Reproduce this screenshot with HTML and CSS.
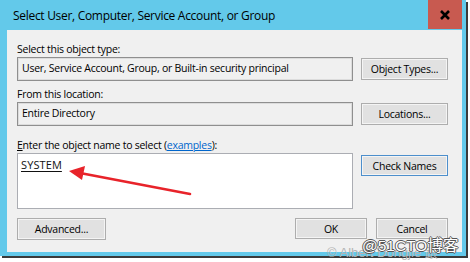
FILE: index.html
```html
<!DOCTYPE html>
<html>
<head>
<meta charset="utf-8">
<link rel="stylesheet" href="styles.css">
</head>
<body>
<div class="window">
  <div class="titlebar">
    <span class="title">Select User, Computer, Service Account, or Group</span>
    <div class="close">
      <svg width="12" height="10" viewBox="0 0 12 10"><path d="M2 1 L10 9 M10 1 L2 9" stroke="#000" stroke-width="2.6" fill="none"/></svg>
    </div>
  </div>
  <div class="content">
    <div class="label">Select this object type:</div>
    <div class="row">
      <div class="field">User, Service Account, Group, or Built-in security principal</div>
      <div class="btn btn-side">Object Types...</div>
    </div>
    <div class="label label-gap">From this location:</div>
    <div class="row">
      <div class="field">Entire Directory</div>
      <div class="btn btn-side">Locations...</div>
    </div>
    <div class="label label-gap2"><u>E</u>nter the object name to select (<a class="link">examples</a>):</div>
    <div class="row">
      <div class="textarea"><span class="system">SYSTEM</span></div>
      <div class="btn btn-side btn-default">Check Names</div>
    </div>
    <div class="bottom">
      <div class="btn btn-adv">Advanced...</div>
      <div class="actions">
        <div class="btn btn-ok">OK</div>
        <div class="btn btn-ok">Cancel</div>
      </div>
    </div>
    <svg class="arrow" width="140" height="40" viewBox="0 0 140 40">
      <path d="M122 33 L12 12" stroke="#E8232A" stroke-width="2.6" fill="none" stroke-linecap="round"/>
      <path d="M1 10 L17 5 L14 19 Z" fill="#E8232A"/>
    </svg>
  </div>
  <div class="watermark">
    <span class="wm-back">© Albert Dongjie 跟</span>
    <span class="wm-front">@51CTO博客</span>
  </div>
</div>
</body>
</html>
```
FILE: styles.css
```css
* { box-sizing: border-box; }
html, body { margin: 0; padding: 0; background: #ffffff; }
body {
  font-family: "Open Sans", "Noto Sans CJK SC", sans-serif;
  font-size: 10.5px;
  letter-spacing: -0.25px;
  color: #000;
  width: 470px;
  height: 262px;
  overflow: hidden;
}
.window {
  position: relative;
  width: 466px;
  height: 256px;
  background: #63C9EA;
  box-shadow: 2px 2px 0 #3a3a3a;
  padding: 0 4px 4px 7px;
  display: flex;
  flex-direction: column;
}
.titlebar {
  height: 30px;
  display: flex;
  align-items: flex-start;
  justify-content: space-between;
}
.title {
  font-size: 12px;
  letter-spacing: -0.3px;
  padding-top: 7px;
  padding-left: 6px;
  color: #000;
}
.close {
  width: 34px;
  height: 29px;
  background: #C85A50;
  display: flex;
  align-items: center;
  justify-content: center;
}
.content {
  position: relative;
  flex: 1;
  background: #F0F0F0;
  padding: 11px 14px 0 10px;
  display: flex;
  flex-direction: column;
}
.label {
  height: 16px;
  line-height: 16px;
  white-space: nowrap;
}
.label-gap { margin-top: 5px; }
.label-gap2 { margin-top: 11px; }
.row {
  display: flex;
  align-items: flex-start;
  gap: 8px;
}
.field {
  width: 336px;
  height: 24px;
  border: 1px solid #8f8f8f;
  box-shadow: inset 0 0 0 1px #dcdcdc;
  background: #F0F0F0;
  padding-left: 4px;
  line-height: 21px;
  white-space: nowrap;
}
.textarea {
  width: 336px;
  height: 56px;
  border: 1px solid #ABADB3;
  background: #ffffff;
  padding: 3px 3px;
}
.system {
  text-decoration: underline;
  text-underline-offset: 2px;
  letter-spacing: 0.1px;
  font-size: 11px;
  color: #111;
}
.btn {
  height: 22px;
  background: #E1E1E1;
  border: 1px solid #ADADAD;
  box-shadow: inset 0 0 0 1px #f4f4f4;
  display: flex;
  align-items: center;
  justify-content: center;
  white-space: nowrap;
}
.btn-side { width: 87px; margin-top: 1px; }
.btn-default { border-color: #4d8fcc; margin-top: 2px; height: 21px; }
.link { color: #0066CC; text-decoration: underline; }
.bottom {
  margin-top: 9px;
  display: flex;
  justify-content: space-between;
  width: 431px;
}
.btn-adv { width: 89px; height: 22px; }
.actions { display: flex; gap: 9px; }
.btn-ok { width: 72px; height: 21px; }
.arrow {
  position: absolute;
  left: 61px;
  top: 131px;
}
.watermark {
  position: absolute;
  left: 326px;
  top: 233px;
  width: 140px;
  height: 25px;
}
.wm-back {
  position: absolute;
  left: 1px;
  top: 9px;
  font-family: "Liberation Sans", "Noto Sans CJK SC", sans-serif;
  font-size: 13px;
  letter-spacing: 0;
  color: #b4b4b4;
  white-space: nowrap;
}
.wm-front {
  position: absolute;
  left: 36px;
  top: 0px;
  font-family: "Liberation Sans", "Noto Sans CJK SC", sans-serif;
  font-size: 15.5px;
  letter-spacing: 0;
  color: #ffffff;
  white-space: nowrap;
  text-shadow: 1px 0 0 #555, -1px 0 0 #555, 0 1px 0 #555, 0 -1px 0 #555;
}
```
